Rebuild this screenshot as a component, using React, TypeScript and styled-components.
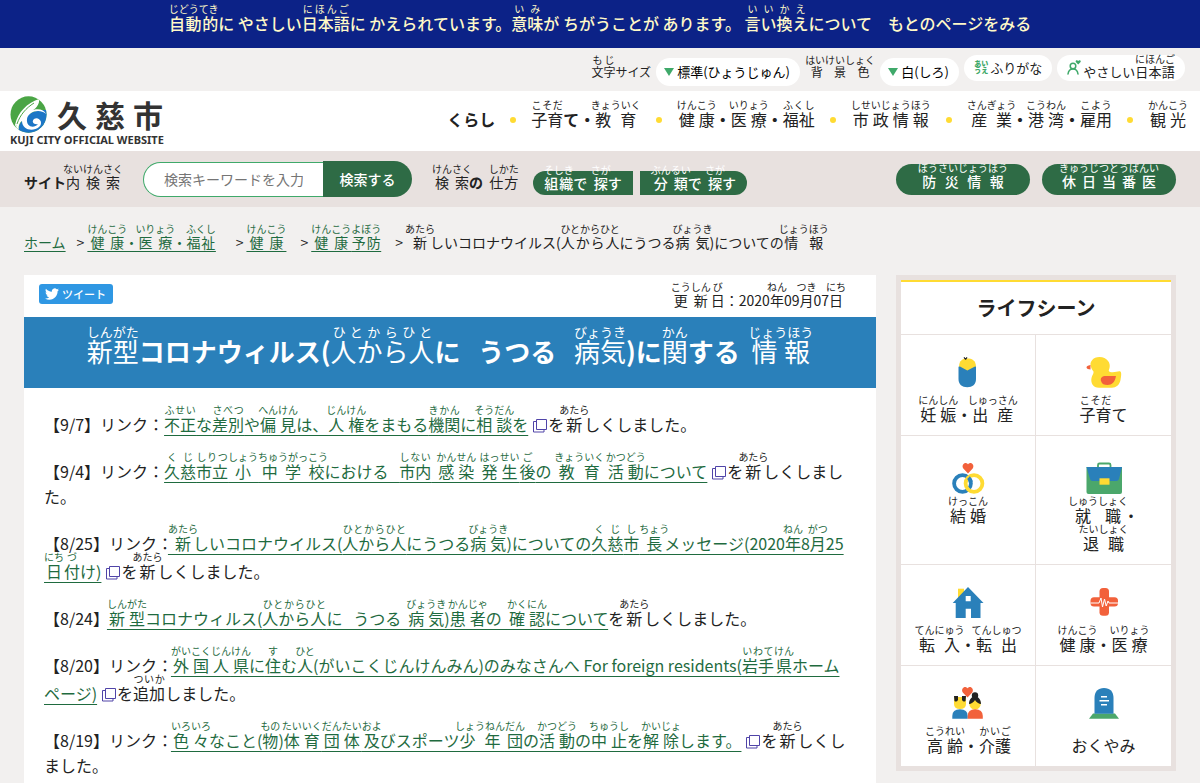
import React from "react";
import styled, { createGlobalStyle, css } from "styled-components";

const colors = {
  navy: "#0c2287",
  cream: "#fff9c8",
  page: "#f2f0ef",
  band: "#e8e1df",
  green: "#2e6b45",
  leaf: "#3fa96a",
  link: "#1f6b3f",
  blue: "#2a80ba",
  yellow: "#ffdb33",
  red: "#f2613b",
  ink: "#222",
};

const bodyFont = `"Noto Sans CJK JP", "Noto Sans", sans-serif`;

/* The first family of ruby sets how closely readings sit over their base. */
const GlobalStyle = createGlobalStyle`
  * { box-sizing: border-box; }
  body {
    margin: 0;
    background: ${colors.page};
    color: ${colors.ink};
    font-family: ${bodyFont};
    font-size: 16px;
    line-height: 26px;
  }
  button, input, select { font-family: inherit; }
  h1, h2, p, ul, ol { margin: 0; padding: 0; }
  ul, ol { list-style: none; }
  ruby { font-family: "Open Sans", ${bodyFont}; font-weight: 400; line-height: 1; }
  rt { font-family: ${bodyFont}; font-size: 10px; line-height: 1; font-weight: 400; }
`;

/* Text with readings written as {base|reading} */
function Furi({ children }: { children: string }) {
  const parts = children.split(/(\{[^}]*\})/);
  return (
    <>
      {parts.map((part, i) => {
        if (!part.startsWith("{")) return <React.Fragment key={i}>{part}</React.Fragment>;
        const [base, reading] = part.slice(1, -1).split("|");
        return (
          <ruby key={i}>
            {base}
            <rt>{reading}</rt>
          </ruby>
        );
      })}
    </>
  );
}

const Page = styled.div`
  display: flex;
  flex-direction: column;
  min-height: 100vh;
`;

const Banner = styled.div`
  display: flex;
  justify-content: center;
  align-items: center;
  height: 48px;
  padding-bottom: 8px;
  background: ${colors.navy};
  color: ${colors.cream};
  white-space: pre;
  font-weight: 500;
  ruby { font-weight: 500; }
`;

const BannerLink = styled.a`
  color: inherit;
  text-decoration: none;
`;

const Tools = styled.div`
  display: flex;
  justify-content: flex-end;
  align-items: center;
  gap: 5px;
  height: 43px;
  padding: 0 15px;
  font-size: 13px;
`;

const ToolLabel = styled.label`
  font-size: 12px;
`;

const SelectPill = styled.span`
  display: flex;
  align-items: center;
  gap: 3px;
  height: 28px;
  margin-top: 4px;
  padding: 0 10px 0 8px;
  border-radius: 14px;
  background: #fff;
`;

const PlainSelect = styled.select`
  appearance: none;
  border: 0;
  padding: 0;
  background: transparent;
  color: #000;
  font-size: 13px;
`;

const ToolButton = styled.button`
  display: flex;
  align-items: center;
  gap: 2px;
  height: 26px;
  margin-bottom: 3px;
  padding: 0 10px 2px;
  border: 0;
  border-radius: 13px;
  background: #fff;
  color: ${colors.ink};
  font-size: 13px;
`;

const Header = styled.header`
  display: flex;
  justify-content: space-between;
  align-items: center;
  height: 60px;
  padding: 0 12px 0 10px;
  background: #fff;
`;

const Logo = styled.a`
  display: flex;
  flex-direction: column;
  color: #333;
  text-decoration: none;
`;

const LogoTop = styled.span`
  display: flex;
  align-items: center;
  gap: 8px;
  height: 38px;
  font-size: 30px;
  font-weight: 700;
  line-height: 38px;
  svg { margin-right: 2px; }
`;

const LogoSub = styled.span`
  font: 700 11px/14px "Noto Sans", sans-serif;
`;

const Nav = styled.nav`
  padding-bottom: 10px;
  ul {
    display: flex;
    align-items: flex-end;
    gap: 15px;
    font-weight: 700;
  }
`;

const NavLink = styled.a`
  color: ${colors.ink};
  text-decoration: none;
`;

const Dot = styled.li`
  width: 6px;
  height: 6px;
  margin-bottom: 9px;
  border-radius: 50%;
  background: ${colors.yellow};
`;

const SearchBar = styled.div`
  display: flex;
  align-items: center;
  height: 56px;
  padding: 0 24px;
  background: ${colors.band};
  font-size: 14px;
`;

const SearchForm = styled.form`
  display: flex;
  align-items: center;
`;

const SearchLabel = styled.label`
  margin-right: 20px;
  font-weight: 700;
`;

const SearchInput = styled.input`
  width: 180px;
  height: 35px;
  padding: 0 20px;
  border: 1px solid ${colors.leaf};
  border-right: 0;
  border-radius: 18px 0 0 18px;
  font-size: 14px;
  &::placeholder { color: #757575; }
`;

const SearchButton = styled.button`
  width: 89px;
  height: 36px;
  border: 0;
  border-radius: 0 18px 18px 0;
  background: ${colors.green};
  color: #fff;
  font-size: 14px;
  font-weight: 500;
`;

const HowTo = styled.span`
  margin: 0 14px 0 20px;
  font-weight: 700;
  white-space: pre;
`;

const pill = css`
  display: flex;
  justify-content: center;
  align-items: center;
  background: ${colors.green};
  color: #fff;
  text-decoration: none;
  white-space: pre;
  ruby { font-weight: 500; }
  font-weight: 500;
`;

const TabLink = styled.a<{ $side: "left" | "right" }>`
  ${pill}
  height: 24px;
  margin: 8px 7px 0 0;
  padding: 0 11px 6px;
  border-radius: ${({ $side }) => ($side === "left" ? "12px 0 0 12px" : "0 12px 12px 0")};
`;

const Alerts = styled.div`
  display: flex;
  gap: 12px;
  margin-left: auto;
`;

const AlertLink = styled.a`
  ${pill}
  width: 134px;
  height: 31px;
  padding-bottom: 2px;
  border-radius: 16px;
`;

const Crumbs = styled.nav`
  padding: 17px 24px 20px;
  font-size: 14px;
  ol { display: flex; align-items: flex-end; white-space: pre; }
  a { color: ${colors.link}; text-underline-offset: 3px; }
  li + li::before { content: ">"; margin: 0 6px 0 11px; }
  li + li + li::before { margin-left: 14px; }
`;

const Columns = styled.div`
  display: flex;
  flex: 1;
  gap: 20px;
  padding: 0 24px;
`;

const Article = styled.main`
  flex: 1;
  min-width: 0;
  background: #fff;
`;

const Meta = styled.div`
  display: flex;
  justify-content: space-between;
  align-items: flex-start;
  height: 42px;
  padding: 7px 30px 0 15px;
  font-size: 14px;
`;

const Updated = styled.p`
  white-space: nowrap;
`;

const Tweet = styled.button`
  display: flex;
  align-items: center;
  gap: 3px;
  height: 20px;
  margin-top: 2px;
  padding: 0 7px 0 6px;
  border: 0;
  border-radius: 3px;
  background: #2f97e3;
  color: #fff;
  font-size: 11px;
  font-weight: 500;
`;

const Title = styled.h1`
  height: 71px;
  padding-top: 15px;
  background: ${colors.blue};
  color: #fff;
  font-size: 26px;
  line-height: 38px;
  text-align: center;
  white-space: pre;
  ruby, rt { font-family: ${bodyFont}; }
  rt { font-size: 13px; }
`;

const Entries = styled.div`
  padding: 17px 24px 0 20px;
  line-height: 25px;
`;

const Entry = styled.p`
  margin-top: 15px;
  &:first-child { margin-top: 0; }
  word-break: break-all;
  white-space: pre-wrap;
  a {
    color: ${colors.link};
    text-underline-offset: 4px;
  }
  svg { margin: 0 1px -2px 5px; }
`;

const Side = styled.aside`
  align-self: flex-start;
  width: 280px;
  margin-bottom: 13px;
  border: 5px solid ${colors.band};
  background: #fff;
`;

const SideTitle = styled.h2`
  height: 54px;
  border-top: 2px solid ${colors.yellow};
  font-size: 20px;
  line-height: 52px;
  text-align: center;
`;

const Scenes = styled.ul`
  display: grid;
  grid-template-columns: 1fr 1fr;
`;

const Scene = styled.li`
  padding: 14px 0 8px;
  border-top: 1px solid ${colors.band};
  text-align: center;
  &:nth-child(odd) { border-right: 1px solid ${colors.band}; }
  a {
    display: block;
    color: ${colors.ink};
    text-decoration: none;
    white-space: pre-line;
  }
  svg { display: block; margin: 0 auto; }
`;

const SceneLabel = styled.span`
  display: flex;
  justify-content: center;
  align-items: flex-end;
  min-height: 32px;
  line-height: 25px;
`;

const LogoMark = () => (
  <svg width="37" height="37" viewBox="0 0 37 37" aria-hidden="true">
    <defs>
      <clipPath id="mark"><ellipse cx="18.5" cy="18.5" rx="18" ry="18.2" /></clipPath>
    </defs>
    <g clipPath="url(#mark)">
      <rect width="37" height="37" fill="#4aa545" />
      <path d="M8 37C8 24 20 13 37 14V37Z" fill="#1c76c6" />
      <path d="M5 29C8 16 17 7 29 3 30 8 26 13 19 17 11 21 7 27 6 31Z" fill="#fff" />
      <path d="M36 18C29 12 18 16 17 23 16 31 24 33 28 28 24 29 21 26 24 23 29 20 34 27 29 31 23 36 12 34 12 25 9 27 8 31 9 35L6 31C8 22 13 18 20 15 27 12 34 13 36 18Z" fill="#fff" />
      <path d="M7 28C10 19 16 12 24 7" fill="none" stroke="#4aa545" strokeWidth="1" />
    </g>
  </svg>
);

const Triangle = () => (
  <svg width="10" height="8" viewBox="0 0 10 8" aria-hidden="true">
    <path d="M0 0H10L5 8Z" fill={colors.leaf} />
  </svg>
);

const KanaMark = styled.span`
  display: grid;
  grid-template-columns: 7px 7px;
  color: ${colors.leaf};
  font-size: 7px;
  font-weight: 900;
  line-height: 7px;
`;

const PersonMark = () => (
  <svg width="14" height="16" viewBox="0 0 14 16" fill="none" stroke={colors.leaf} strokeWidth="1.5" aria-hidden="true">
    <circle cx="6" cy="7" r="2.8" />
    <path d="M1 15C1.500 11 3.500 10 6 10S10.500 11 11 15" strokeLinecap="round" />
    <path d="M11.200 5.500 8.800 3C8 1.500 10.200 0.500 11.200 2 12.200 0.500 14.400 1.500 13.600 3Z" fill={colors.leaf} stroke="none" />
  </svg>
);

const Bird = () => (
  <svg width="14" height="14" viewBox="0 0 24 24" fill="#fff" aria-hidden="true">
    <path d="M23.950 4.570a10 10 0 0 1-2.820.780 4.960 4.960 0 0 0 2.160-2.720c-.950.550-2 .950-3.130 1.180a4.920 4.920 0 0 0-8.380 4.480C7.690 8.090 4.070 6.130 1.640 3.160a4.820 4.820 0 0 0-.670 2.480c0 1.710.870 3.210 2.190 4.100a4.900 4.900 0 0 1-2.230-.620v.060a4.920 4.920 0 0 0 3.950 4.830 5 5 0 0 1-2.210.080 4.940 4.940 0 0 0 4.600 3.420A9.870 9.870 0 0 1 0 19.540a13.990 13.990 0 0 0 7.560 2.210c9.050 0 14-7.500 14-13.980 0-.210 0-.420-.020-.630a9.940 9.940 0 0 0 2.460-2.550z" />
  </svg>
);

const External = () => (
  <svg width="14" height="15" viewBox="0 0 14 15" fill="none" stroke="#5044a8" role="img" aria-label="新しいウィンドウで開きます">
    <path d="M3.500 1.500H13.500V11.500H3.500Z" />
    <path d="M3 3.500H0.500V14H11V12" />
  </svg>
);

const Heart = ({ x, y }: { x: number; y: number }) => (
  <path
    transform={`translate(${x} ${y})`}
    d="M5.500 10.500 0.800 5.500C-1.200 2.500 1.500-0.500 4 0.200 4.800 0.400 5.500 1.300 5.500 1.300S6.200 0.400 7 0.200C9.500-0.500 12.200 2.500 10.200 5.500Z"
    fill={colors.red}
  />
);

const drawings: Record<string, React.ReactNode> = {
  baby: (
    <>
      <path d="M11 18C11 11 15 9.500 19.300 9.500S28 11 28 18V24H11Z" fill={colors.yellow} />
      <path d="M10.500 17.700 12 17.500 19.300 21.500 27 17.500 28 17.700V30C28 35.500 24.500 38.200 19.300 38.200S10.500 35.500 10.500 30Z" fill={colors.blue} />
      <path d="M16 8.300 17.700 10.500M19 8.300 17.500 10.500" stroke="#222" strokeWidth="1.200" />
    </>
  ),
  duck: (
    <>
      <path d="M7 18C5 13 9 8 15.500 8 23 8 27 14 25.500 19 25 21 24 22 26 23 31 24 33 22 36 22.300 38 23 37 28 36.500 31 35.500 36 32 38.700 28 38.700H15C9 38.700 6.500 34 7.500 29 8 26 10 24.500 9.500 22.500 8.500 21 7.500 20 7 18Z" fill={colors.yellow} />
      <path d="M6.500 16C3.500 16.500 2.500 17.500 2.500 18.500S4.500 20.500 6.500 20.500Z" fill={colors.red} />
      <path d="M32 27H22C18 27 16 29 17 32 18 35 20 36 23.500 36 28 36 31 33 32 27Z" fill={colors.red} />
    </>
  ),
  rings: (
    <>
      <Heart x={14.500} y={13} />
      <circle cx="14.500" cy="33.500" r="8.400" fill="none" stroke={colors.blue} strokeWidth="3.800" />
      <circle cx="26" cy="33.500" r="8.400" fill="none" stroke={colors.yellow} strokeWidth="3.800" />
      <path d="M20.500 27.700A8.400 8.400 0 0 1 22.800 32" fill="none" stroke={colors.blue} strokeWidth="3.800" />
    </>
  ),
  bag: (
    <>
      <path d="M14 18V15Q14 13.500 15.500 13.500H25Q26.500 13.500 26.500 15V18" fill="none" stroke="#4ba76b" strokeWidth="1.800" />
      <path d="M2.500 17H38V42Q38 44 36 44H4.500Q2.500 44 2.500 42Z" fill="#4ba76b" />
      <path d="M2.500 17H38L35 29Q34.500 31 32 31H8.500Q6.500 31 6 29Z" fill={colors.blue} />
      <rect x="15.500" y="28.300" width="10" height="6.400" fill={colors.yellow} />
    </>
  ),
  house: (
    <>
      <rect x="10" y="9.700" width="6" height="9" fill={colors.yellow} />
      <path fillRule="evenodd" d="M20 8 35.500 24H32.500V39H23V29.700H17.700V39H7.700V24H4.700ZM17.700 17V22.300H22.700V17Z" fill={colors.blue} />
    </>
  ),
  cross: (
    <>
      <rect x="6.500" y="18.200" width="27.500" height="9.400" rx="3.500" fill={colors.red} />
      <rect x="15.500" y="9" width="9.500" height="27.700" rx="3.500" fill={colors.red} />
      <path d="M6.500 24H15L17 19 18.500 28 20.500 20 22.200 27 24 22 25 24H34" fill="none" stroke="#fff" strokeWidth="1" />
    </>
  ),
  elders: (
    <>
      <Heart x={14} y={7} />
      <path d="M6 17H18V24Q18 29 12 29T6 24Z" fill={colors.yellow} />
      <path d="M6 16H10V20Q8.500 22.500 6.500 21ZM18 16H14V20Q15.500 22.500 17.500 21Z" fill="#222" />
      <path d="M4.300 38.700V36Q4.300 29.300 12 29.300T19.700 36V38.700Z" fill={colors.blue} />
      <circle cx="27" cy="24" r="5.700" fill={colors.yellow} />
      <circle cx="27" cy="15.500" r="3.200" fill="#222" />
      <path d="M21 24C21 14 33 14 33 24 31 24 28 22 27 20 26 22 23 24 21 24Z" fill="#222" />
      <path d="M19.700 38.700V36Q19.700 29.300 27.200 29.300T34.800 36V38.700Z" fill={colors.red} />
    </>
  ),
  grave: (
    <>
      <path d="M9 33.500H31L35 38.700H5Z" fill="#4ba76b" />
      <path d="M10.500 33.700V18C10.500 11.500 14 8 20 8S29.500 11.500 29.500 18V33.700Z" fill={colors.blue} />
      <path d="M17 16.700H23M15.500 20.700H25M17 24.700H23" stroke="#fff" strokeWidth="1.600" />
    </>
  ),
};

const nav = [
  "くらし",
  "{子育|こそだ}て・{教育|きょういく}",
  "{健康|けんこう}・{医療|いりょう}・{福祉|ふくし}",
  "{市政情報|しせいじょうほう}",
  "{産業|さんぎょう}・{港湾|こうわん}・{雇用|こよう}",
  "{観光|かんこう}",
];

const crumbs = [
  { label: "ホーム", after: "" },
  { label: "{健康|けんこう}・{医療|いりょう}・{福祉|ふくし}", after: "  " },
  { label: "{健康|けんこう}", after: "" },
  { label: "{健康|けんこう}{予防|よぼう}", after: "" },
];

const updated = "を{新|あたら}しくしました。";

const entries = [
  { head: "【9/7】リンク：", link: "{不正|ふせい}な{差別|さべつ}や{偏見|へんけん}は、{人権|じんけん}をまもる{機関|きかん}に{相談|そうだん}を", icon: true, tail: updated },
  { head: "【9/4】リンク：", link: "{久慈|くじ}{市立|しりつ}{小|しょう}{中学校|ちゅうがっこう}における   {市内|しない}  {感染|かんせん}  {発生|はっせい}{後|ご}の  {教育|きょういく}  {活動|かつどう}について", icon: true, tail: updated },
  { head: "【8/25】リンク：", link: "{新|あたら}しいコロナウイルス({人から人|ひとからひと}にうつる{病気|びょうき})についての{久慈|くじ}{市|し}{長|ちょう}メッセージ(2020{年|ねん}8{月|がつ}25{日|にち}{付|づ}け)", icon: true, tail: updated },
  { head: "【8/24】", link: "{新型|しんがた}コロナウィルス({人から人|ひとからひと}に   うつる  {病気|びょうき}){患者|かんじゃ}の  {確認|かくにん}について", icon: false, tail: updated },
  { head: "【8/20】リンク：", link: "{外国人|がいこくじん}{県|けん}に{住|す}む{人|ひと}(がいこくじんけんみん)のみなさんへ For foreign residents({岩手|いわて}{県|けん}ホームページ)", icon: true, tail: "を{追加|ついか}しました。" },
  { head: "【8/19】リンク：", link: "{色々|いろいろ}なこと({物|もの}){体育|たいいく}{団体|だんたい}{及|およ}びスポーツ{少年|しょうねん}{団|だん}の{活動|かつどう}の{中止|ちゅうし}を{解除|かいじょ}します。", icon: true, tail: updated },
];

const scenes = [
  ["baby", "{妊娠|にんしん}・{出産|しゅっさん}"],
  ["duck", "{子育|こそだ}て"],
  ["rings", "{結婚|けっこん}"],
  ["bag", "{就職|しゅうしょく}・\n{退職|たいしょく}"],
  ["house", "{転入|てんにゅう}・{転出|てんしゅつ}"],
  ["cross", "{健康|けんこう}・{医療|いりょう}"],
  ["elders", "{高齢|こうれい}・{介護|かいご}"],
  ["grave", "おくやみ"],
];

export default function App() {
  return (
    <Page>
      <GlobalStyle />
      <Banner>
        <span>
          <Furi>{"{自動的|じどうてき}に やさしい{日本語|にほんご}に かえられています。{意味|いみ}が ちがうことが あります。 "}</Furi>
          <BannerLink href="#about"><Furi>{"{言い換え|いいかえ}について"}</Furi></BannerLink>
          {"\u3000"}
          <BannerLink href="#original">もとのページをみる</BannerLink>
        </span>
      </Banner>

      <Tools>
        <ToolLabel htmlFor="size"><Furi>{"{文字|もじ}サイズ"}</Furi></ToolLabel>
        <SelectPill>
          <Triangle />
          <PlainSelect id="size"><option>標準(ひょうじゅん)</option></PlainSelect>
        </SelectPill>
        <ToolLabel htmlFor="bg"><Furi>{"{背景色|はいけいしょく}"}</Furi></ToolLabel>
        <SelectPill>
          <Triangle />
          <PlainSelect id="bg"><option>白(しろ)</option></PlainSelect>
        </SelectPill>
        <ToolButton type="button">
          <KanaMark aria-hidden="true"><span>あ</span><span>い</span><span>う</span><span>え</span></KanaMark>
          ふりがな
        </ToolButton>
        <ToolButton type="button">
          <PersonMark />
          <span><Furi>{"やさしい{日本語|にほんご}"}</Furi></span>
        </ToolButton>
      </Tools>

      <Header>
        <Logo href="#top">
          <LogoTop><LogoMark /><span>久</span><span>慈</span><span>市</span></LogoTop>
          <LogoSub>KUJI CITY OFFICIAL WEBSITE</LogoSub>
        </Logo>
        <Nav>
          <ul>
            {nav.map((item, i) => (
              <React.Fragment key={item}>
                {i > 0 && <Dot aria-hidden="true" />}
                <li><NavLink href="#nav"><Furi>{item}</Furi></NavLink></li>
              </React.Fragment>
            ))}
          </ul>
        </Nav>
      </Header>

      <SearchBar>
        <SearchForm role="search">
          <SearchLabel htmlFor="q"><Furi>{"サイト{内|ない}{検索|けんさく}"}</Furi></SearchLabel>
          <SearchInput id="q" type="text" placeholder="検索キーワードを入力" />
          <SearchButton type="button">検索する</SearchButton>
        </SearchForm>
        <HowTo><Furi>{"{検索|けんさく}の  {仕方|しかた}"}</Furi></HowTo>
        <TabLink href="#org" $side="left"><span><Furi>{"{組織|そしき}で  {探|さが}す"}</Furi></span></TabLink>
        <TabLink href="#category" $side="right"><span><Furi>{"{分類|ぶんるい}で  {探|さが}す"}</Furi></span></TabLink>
        <Alerts>
          <AlertLink href="#bousai"><span><Furi>{"{防災情報|ぼうさいじょうほう}"}</Furi></span></AlertLink>
          <AlertLink href="#doctor"><span><Furi>{"{休日当番医|きゅうじつとうばんい}"}</Furi></span></AlertLink>
        </Alerts>
      </SearchBar>

      <Crumbs>
        <ol>
          {crumbs.map(({ label, after }) => (
            <li key={label}><a href="#crumb"><Furi>{label}</Furi></a>{after}</li>
          ))}
          <li><Furi>{"{新|あたら}しいコロナウイルス({人から人|ひとからひと}にうつる{病気|びょうき})についての{情報|じょうほう}"}</Furi></li>
        </ol>
      </Crumbs>

      <Columns>
        <Article>
          <Meta>
            <Tweet type="button"><Bird />ツイート</Tweet>
            <Updated><Furi>{"{更新|こうしん}{日|び}：2020{年|ねん}09{月|つき}07{日|にち}"}</Furi></Updated>
          </Meta>
          <Title><Furi>{"{新型|しんがた}コロナウィルス({人から人|ひとからひと}に   うつる   {病気|びょうき})に{関|かん}する  {情報|じょうほう}"}</Furi></Title>
          <Entries>
            {entries.map((e) => (
              <Entry key={e.head}>
                {e.head}
                <a href="#entry"><Furi>{e.link}</Furi></a>
                {e.icon && <External />}
                <Furi>{e.tail}</Furi>
              </Entry>
            ))}
          </Entries>
        </Article>

        <Side>
          <SideTitle>ライフシーン</SideTitle>
          <Scenes>
            {scenes.map(([key, label]) => (
              <Scene key={key}>
                <a href={`#${key}`}>
                  <svg width="40" height="46" viewBox="0 0 40 46" aria-hidden="true">{drawings[key]}</svg>
                  <SceneLabel><span><Furi>{label}</Furi></span></SceneLabel>
                </a>
              </Scene>
            ))}
          </Scenes>
        </Side>
      </Columns>
    </Page>
  );
}
